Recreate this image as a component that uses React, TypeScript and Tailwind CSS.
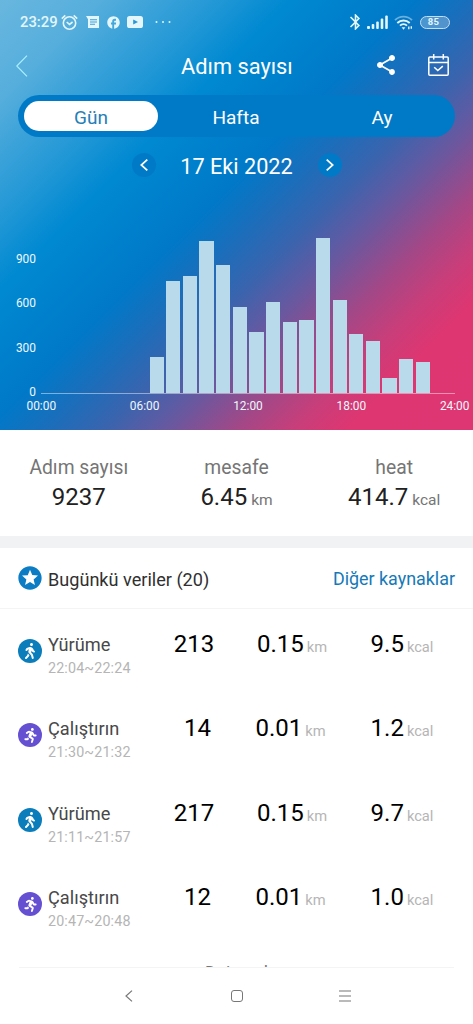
import { FaRunning, FaWalking } from "react-icons/fa";
import { MdBluetooth, MdFacebook, MdShare, MdStars } from "react-icons/md";

interface Activity {
  id: number;
  type: "walk" | "run";
  time: string;
  steps: number;
  km: string;
  kcal: string;
}

const activities: Activity[] = [
  { id: 1, type: "walk", time: "22:04~22:24", steps: 213, km: "0.15", kcal: "9.5" },
  { id: 2, type: "run", time: "21:30~21:32", steps: 14, km: "0.01", kcal: "1.2" },
  { id: 3, type: "walk", time: "21:11~21:57", steps: 217, km: "0.15", kcal: "9.7" },
  { id: 4, type: "run", time: "20:47~20:48", steps: 12, km: "0.01", kcal: "1.0" },
];

const hourlySteps = [
  243, 752, 792, 1025, 863, 580, 411, 614, 479, 492, 1045, 630, 398, 351, 101, 229, 212,
];

// 300 steps = 44.5px
const PX_PER_STEP = 44.5 / 300;

function StatusBar() {
  return (
    <div className="flex h-11 items-center justify-between pl-5 pr-[23px] text-[#e3f6fb]">
      <div className="flex items-center">
        <span className="w-[41px] whitespace-nowrap text-[14.8px] font-medium leading-5">23:29</span>
        <svg className="h-[17px] w-[17px]" viewBox="0 0 17 17" fill="none" stroke="currentColor" strokeWidth="1.6">
          <circle cx="8.5" cy="9" r="6.2" />
          <path d="M.8 4.6 4.3 1.3M16.2 4.6 12.7 1.3M5.7 8l2.8 2.4L11.6 8" />
        </svg>
        <svg className="ml-[8px] h-3 w-[14px]" viewBox="0 0 14 12" fill="currentColor">
          <path d="M0 0h13v12H2V3.2z" />
          <path d="M4 3.7h7M4 6h7M4 8.3h5" stroke="#3ba1d8" strokeWidth="1.1" />
        </svg>
        <MdFacebook className="ml-[6px] h-[15px] w-[15px]" />
        <svg className="ml-[6px] h-3 w-4" viewBox="0 0 16 12">
          <rect width="16" height="12" rx="2.6" fill="currentColor" />
          <path d="m6.2 3.4 4.8 2.6-4.8 2.6z" fill="#2797d6" />
        </svg>
        <svg className="ml-3 h-1 w-4" viewBox="0 0 16 4" fill="currentColor">
          <circle cx="1.5" cy="2" r="1" />
          <circle cx="8" cy="2" r="1" />
          <circle cx="14.5" cy="2" r="1" />
        </svg>
      </div>
      <div className="flex items-center">
        <MdBluetooth className="h-[20px] w-[19px]" />
        <svg className="ml-[2px] h-[14px] w-[21px]" viewBox="0 0 21 14" fill="currentColor">
          <rect x="0" y="11" width="3" height="3" rx="1" />
          <rect x="4.7" y="9" width="2.6" height="5" rx="1" />
          <rect x="9.2" y="6.5" width="2.6" height="7.5" rx="1" />
          <rect x="13.7" y="3.5" width="2.6" height="10.5" rx="1" />
          <rect x="18.2" y="0.5" width="2.6" height="13.5" rx="1" />
        </svg>
        <svg className="ml-[6px] h-[15px] w-[20px]" viewBox="0 0 20 15" fill="none" stroke="currentColor" strokeWidth="1.9">
          <path d="M1 5.2a12 12 0 0 1 17 0" opacity=".45" />
          <path d="M3.3 8a9 9 0 0 1 12.4 0M6 10.6a5.2 5.2 0 0 1 7 0" />
          <path d="m7.6 12.3 1.9 2.4 1.9-2.4z" fill="currentColor" stroke="none" />
          <path d="M14.8 14.2v-2.6M17.3 11.2v2.6" strokeWidth="1.4" />
        </svg>
        <div className="ml-[6px] flex h-[13px] w-[30px] items-center justify-center rounded-full border border-[#c4dff3] bg-white/25 pr-[3px] text-[9.5px] font-bold leading-none tracking-[0.4px]">
          85
        </div>
      </div>
    </div>
  );
}

function TitleBar() {
  return (
    <div className="flex h-[44px] items-center pl-4 pr-6 text-white">
      <svg className="h-[22px] w-3" viewBox="0 0 12 22" fill="none" stroke="#a9f0ff" strokeWidth="1.2">
        <path d="M11 .7.8 11 11 21.3" />
      </svg>
      <h1 className="ml-[153px] mt-px w-[112px] whitespace-nowrap text-[21.8px] leading-7">Adım sayısı</h1>
      <MdShare className="-mt-[2px] ml-[81px] h-6 w-6" />
      <svg className="-mt-[2px] ml-auto h-[22px] w-[21px]" viewBox="0 0 21 22" fill="none" stroke="currentColor" strokeWidth="1.5">
        <rect x=".8" y="3" width="19.4" height="18.2" rx="1" />
        <path d="M1 8.4h19M5.7 0v5.5M15.3 0v5.5M6.2 13.2l3.6 3.4 5-4.5" />
      </svg>
    </div>
  );
}

function PeriodTabs() {
  return (
    <div className="mx-[18px] mt-[7px] flex h-[42px] rounded-full bg-[#007ac7] p-[6px] text-[19px] leading-[32px]">
      <button className="h-[30px] w-[134px] shrink-0 rounded-full bg-white pt-px text-[#2580b8]">Gün</button>
      <button className="ml-[5px] w-[146px] shrink-0 pt-px text-white">Hafta</button>
      <button className="w-[146px] shrink-0 pt-px text-white">Ay</button>
    </div>
  );
}

function DatePicker() {
  return (
    <div className="mt-[16px] flex h-6 items-center justify-center text-white">
      <button className="flex h-6 w-6 items-center justify-center rounded-full bg-[#007ac7]">
        <svg className="h-3 w-2" viewBox="0 0 8 12" fill="none" stroke="currentColor" strokeWidth="1.7">
          <path d="M7.3.6 1.3 6l6 5.4" />
        </svg>
      </button>
      <span className="mx-[24px] mt-[3px] w-[114px] whitespace-nowrap text-center text-[21.7px] leading-6">
        17 Eki 2022
      </span>
      <button className="flex h-6 w-6 items-center justify-center rounded-full bg-[#007ac7]">
        <svg className="h-3 w-2" viewBox="0 0 8 12" fill="none" stroke="currentColor" strokeWidth="1.7">
          <path d="m.7.6 6 5.4-6 5.4" />
        </svg>
      </button>
    </div>
  );
}

function StepChart() {
  return (
    <div className="mt-[61px] text-[11.9px] text-[#eef8fd]">
      <div className="flex h-[156px]">
        <div className="flex w-9 flex-col justify-end text-right leading-[14px]">
          <span className="mb-[30.5px]">900</span>
          <span className="mb-[30.5px]">600</span>
          <span className="mb-[30.5px]">300</span>
          <span className="-mb-[5px]">0</span>
        </div>
        <div className="ml-[5px] mr-[18px] flex flex-1 items-end gap-[2.35px] border-b border-white/45 pl-[108.5px]">
          {hourlySteps.map((steps, i) => (
            <div
              key={i}
              className="w-[14.3px] shrink-0 bg-[#b9daea]"
              style={{ height: steps * PX_PER_STEP }}
            />
          ))}
        </div>
      </div>
      <div className="ml-[26.5px] mt-[5px] flex w-[443px] justify-between leading-[14px]">
        <span>00:00</span>
        <span>06:00</span>
        <span>12:00</span>
        <span>18:00</span>
        <span>24:00</span>
      </div>
    </div>
  );
}

interface SummaryItemProps {
  label: string;
  value: string;
  unit?: string;
}

function SummaryItem({ label, value, unit }: SummaryItemProps) {
  return (
    <div className="flex flex-1 flex-col items-center">
      <span className="text-[19.3px] leading-6 text-[#757575]">{label}</span>
      <span className="mt-px whitespace-nowrap text-[24px] leading-8 text-[#212121]">
        {value}
        {unit && <span className="ml-1 text-[15.5px] text-[#757575]">{unit}</span>}
      </span>
    </div>
  );
}

function ActivityRow({ activity }: { activity: Activity }) {
  const isWalk = activity.type === "walk";
  return (
    <div className="flex h-[84.4px] items-start pl-[18px]">
      <div
        className={`mt-[7px] flex h-6 w-6 items-center justify-center rounded-full text-white ${
          isWalk ? "bg-[#0c7dbb]" : "bg-[#6650d2]"
        }`}
      >
        {isWalk ? (
          <FaWalking className="h-4 w-4" />
        ) : (
          <FaRunning className="h-[15px] w-[15px]" />
        )}
      </div>
      <div className="ml-[6px] w-[100px] pt-px">
        <p className="text-[18.2px] leading-6 text-[#484848]">{isWalk ? "Yürüme" : "Çalıştırın"}</p>
        <p className="text-[14.3px] leading-[22px] tracking-[0.15px] text-[#b5b5b5]">{activity.time}</p>
      </div>
      <p className={`text-center text-[24px] leading-6 text-black ${isWalk ? "w-[92px]" : "w-[99px]"}`}>
        {activity.steps}
      </p>
      <p
        className={`whitespace-nowrap text-center text-[24px] leading-6 text-black ${
          isWalk ? "w-[104px]" : "w-[87px]"
        }`}
      >
        {activity.km}
        <span className="ml-[3px] text-[14.7px] text-[#b5b5b5]">km</span>
      </p>
      <p
        className={`whitespace-nowrap text-center text-[24px] leading-6 text-black ${
          isWalk ? "w-[116px]" : "ml-[10px] w-[116px]"
        }`}
      >
        {activity.kcal}
        <span className="ml-[3px] text-[14.7px] text-[#b5b5b5]">kcal</span>
      </p>
    </div>
  );
}

export default function App() {
  return (
    <div className="flex h-[1024px] w-[473px] flex-col overflow-hidden bg-white font-['Roboto',sans-serif]">
      <header className="h-[430px] shrink-0 bg-[linear-gradient(135deg,#68b7df_0%,#56aedc_11%,#3da3d9_17%,#2398d6_24%,#0089d1_32%,#0079c8_46%,#1d6dba_53%,#3a64ae_59%,#625aa2_65%,#a54786_74%,#c83e7a_80%,#de3671_86%,#de3672_100%)]">
        <StatusBar />
        <TitleBar />
        <PeriodTabs />
        <DatePicker />
        <StepChart />
      </header>

      <section className="flex h-[106px] shrink-0 pt-[26px]">
        <SummaryItem label="Adım sayısı" value="9237" />
        <SummaryItem label="mesafe" value="6.45" unit="km" />
        <SummaryItem label="heat" value="414.7" unit="kcal" />
      </section>

      <div className="h-3 shrink-0 bg-[#f0f2f3]" />

      <section className="flex h-[61px] shrink-0 items-center border-b border-[#f4f4f4] px-[18px]">
        <MdStars className="-ml-[2px] h-7 w-7 text-[#0c7dc4]" />
        <h2 className="ml-1 mt-[3px] text-[18.1px] text-[#303030]">Bugünkü veriler (20)</h2>
        <button className="ml-auto mt-[3px] text-[17.9px] text-[#1579b8]">Diğer kaynaklar</button>
      </section>

      <main className="h-[358px] shrink-0 overflow-hidden pt-[23px]">
        {activities.map((activity) => (
          <ActivityRow key={activity.id} activity={activity} />
        ))}
        {/* next row, only its top edge shows above the navigation bar */}
        <p className="-mt-[9px] text-center text-[17.5px] leading-6 text-[#777]">Dairesel</p>
      </main>

      <nav className="mx-[19px] flex flex-1 items-center border-t border-[#f4f4f4] text-[#777]">
        <svg className="ml-[106px] h-3 w-2" viewBox="0 0 8 12" fill="none" stroke="currentColor" strokeWidth="1.2">
          <path d="M7 .6 1 6l6 5.4" />
        </svg>
        <span className="ml-[98px] h-3 w-3 rounded-[3px] border border-current" />
        <svg className="ml-[96px] h-3 w-3" viewBox="0 0 12 12" stroke="currentColor" strokeWidth="1.1">
          <path d="M0 1h12M0 6h12M0 11h12" />
        </svg>
      </nav>
    </div>
  );
}
